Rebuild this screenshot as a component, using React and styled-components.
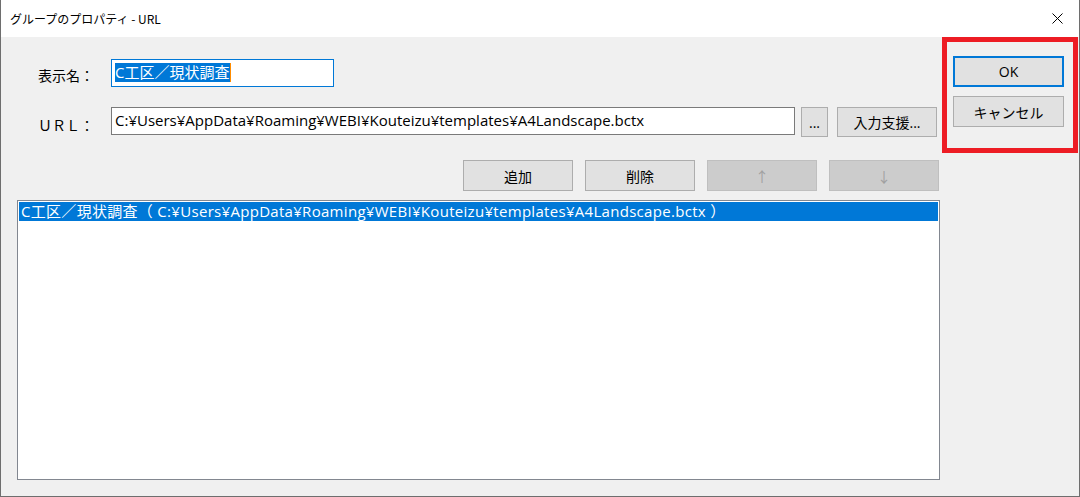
import React from 'react'
import styled, { createGlobalStyle } from 'styled-components';

const GlobalStyle = createGlobalStyle`
  html, body {
    margin: 0;
    padding: 0;
    background: #ffffff;
  }
  * {
    box-sizing: border-box;
  }
`;

const FONT = `"Open Sans", "Noto Sans CJK JP", sans-serif`;

const Window = styled.div`
  width: 1080px;
  height: 497px;
  display: flex;
  flex-direction: column;
  border: 1px solid #6e6e6e;
  border-top: none;
  font-family: ${FONT};
  color: #000;
  overflow: hidden;
`;

const TitleBar = styled.div`
  height: 37px;
  flex: none;
  background: #ffffff;
  display: flex;
  align-items: center;
  justify-content: space-between;
  padding: 0 14px 0 9px;
  font-size: 12px;
  font-family: "Noto Sans CJK JP", sans-serif;
`;

const CloseBtn = styled.div`
  width: 16px;
  height: 16px;
  display: flex;
  align-items: center;
  justify-content: center;
`;

const Body = styled.div`
  flex: 1;
  background: #f0f0f0;
  display: flex;
  align-items: flex-start;
`;

const Main = styled.div`
  width: 940px;
  padding: 22px 0 0 16px;
  display: flex;
  flex-direction: column;
`;

const FieldRow = styled.div`
  display: flex;
  align-items: flex-start;
  margin-top: ${p => p.$top || 0}px;
`;

const Label = styled.div`
  width: 94px;
  padding: ${p => p.$pad || 7}px 0 0 21px;
  font-size: 14px;
  line-height: 20px;
  white-space: nowrap;
`;

const TextBox = styled.div`
  width: ${p => p.$w}px;
  height: 28px;
  background: #ffffff;
  border: 1px solid ${p => (p.$focus ? '#0078d7' : '#7a7a7a')};
  padding: 3px 0 0 3px;
  font-size: 15px;
  line-height: 19px;
  white-space: nowrap;
  overflow: hidden;
`;

const Selected = styled.span`
  display: inline-block;
  background: #0078d7;
  color: #ffffff;
  padding-right: 1px;
  border-right: 1px solid #ff8c00;
`;

const Button = styled.div`
  width: ${p => p.$w || 110}px;
  height: ${p => p.$h || 30}px;
  flex: none;
  display: flex;
  align-items: center;
  justify-content: center;
  font-size: 14px;
  background: ${p => (p.$disabled ? '#cccccc' : '#e1e1e1')};
  color: ${p => (p.$disabled ? '#a0a0a0' : '#000')};
  border: ${p => (p.$default ? '2px solid #0078d7' : `1px solid ${p.$disabled ? '#bfbfbf' : '#adadad'}`)};
  margin-left: ${p => p.$ml || 0}px;
  white-space: nowrap;
`;

const ButtonRow = styled.div`
  display: flex;
  justify-content: flex-end;
  gap: 12px;
  width: 922px;
  margin-top: 23px;
`;

const ListBox = styled.div`
  width: 923px;
  height: 280px;
  margin-top: 9px;
  background: #ffffff;
  border: 1px solid #828790;
  padding: 1px;
`;

const ListItem = styled.div`
  height: 19px;
  padding-left: 2px;
  font-size: 15px;
  line-height: 18px;
  letter-spacing: 0.3px;
  white-space: nowrap;
  background: ${p => (p.$selected ? '#0078d7' : 'transparent')};
  color: ${p => (p.$selected ? '#ffffff' : '#000')};
`;

const Side = styled.div`
  width: 136px;
  height: 116px;
  margin-left: 1px;
  border: 5px solid #ed1c24;
  padding: 14px 0 0 6px;
  display: flex;
  flex-direction: column;
  gap: 9px;
`;

const path = 'C:¥Users¥AppData¥Roaming¥WEBI¥Kouteizu¥templates¥A4Landscape.bctx';

export default function App() {
  return (
    <>
      <GlobalStyle />
      <Window>
        <TitleBar>
          <span>グループのプロパティ - URL</span>
          <CloseBtn>
            <svg width="11" height="11" viewBox="0 0 11 11">
              <path d="M0.5 0.5 L10.5 10.5 M10.5 0.5 L0.5 10.5" stroke="#000" strokeWidth="1" fill="none" />
            </svg>
          </CloseBtn>
        </TitleBar>
        <Body>
          <Main>
            <FieldRow>
              <Label $pad={7}>表示名：</Label>
              <TextBox $w={223} $focus>
                <Selected>C工区／現状調査</Selected>
              </TextBox>
            </FieldRow>
            <FieldRow $top={20}>
              <Label $pad={9}>ＵＲＬ：</Label>
              <TextBox $w={684}>{path}</TextBox>
              <Button $w={27} $ml={6}>...</Button>
              <Button $w={100} $ml={9}>入力支援...</Button>
            </FieldRow>
            <ButtonRow>
              <Button $h={31}>追加</Button>
              <Button $h={31}>削除</Button>
              <Button $h={31} $disabled>↑</Button>
              <Button $h={31} $disabled>↓</Button>
            </ButtonRow>
            <ListBox>
              <ListItem $selected>C工区／現状調査（ {path} ）</ListItem>
            </ListBox>
          </Main>
          <Side>
            <Button $w={111} $h={31} $default>OK</Button>
            <Button $w={111} $h={31}>キャンセル</Button>
          </Side>
        </Body>
      </Window>
    </>
  )
}
